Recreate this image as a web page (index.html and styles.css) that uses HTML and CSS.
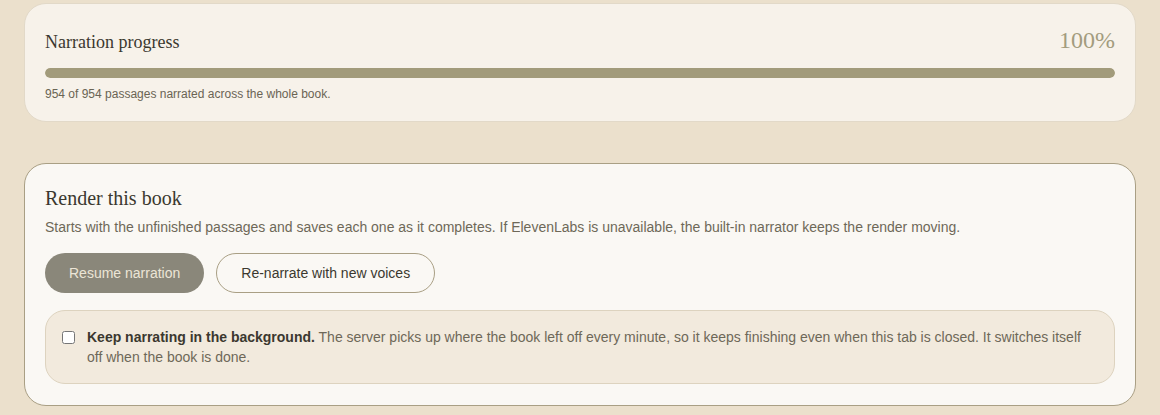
FILE: index.html
```html
<!DOCTYPE html>
<html lang="en">
<head>
<meta charset="utf-8">
<title>Narration</title>
<link rel="stylesheet" href="styles.css">
</head>
<body>
<main class="page">
  <section class="card card-progress">
    <div class="progress-head">
      <h2 class="card-title">Narration progress</h2>
      <span class="percent">100%</span>
    </div>
    <div class="bar"><div class="bar-fill" style="width:100%"></div></div>
    <p class="caption">954 of 954 passages narrated across the whole book.</p>
  </section>

  <section class="card card-render">
    <h2 class="render-title">Render this book</h2>
    <p class="desc">Starts with the unfinished passages and saves each one as it completes. If ElevenLabs is unavailable, the built-in narrator keeps the render moving.</p>
    <div class="actions">
      <button class="btn btn-primary" type="button">Resume narration</button>
      <button class="btn btn-outline" type="button">Re-narrate with new voices</button>
    </div>
    <label class="bg-option">
      <input type="checkbox" class="check">
      <span class="bg-text"><strong>Keep narrating in the background.</strong> The server picks up where the book left off every minute, so it keeps finishing even when this tab is closed. It switches itself off when the book is done.</span>
    </label>
  </section>
</main>
</body>
</html>
```
FILE: styles.css
```css
html, body {
  margin: 0;
  padding: 0;
  background: #ebe0cc;
}

body {
  font-family: "Liberation Sans", Arial, sans-serif;
  color: #3b382f;
}

.page {
  padding: 3px 24px 10px;
  display: flex;
  flex-direction: column;
  gap: 41px;
}

.card {
  border-radius: 22px;
  padding: 22px 20px 21px;
}

.card-progress {
  background: #f7f2ea;
  border: 1px solid #e2d9c8;
  padding-bottom: 19px;
}

.progress-head {
  display: flex;
  justify-content: space-between;
  align-items: baseline;
  line-height: 29px;
}

.card-title {
  margin: 0;
  font-family: "Liberation Serif", "Times New Roman", serif;
  font-weight: normal;
  font-size: 18px;
  color: #3b382f;
}

.percent {
  font-family: "Liberation Serif", "Times New Roman", serif;
  font-size: 24px;
  color: #a39c7e;
}

.bar {
  margin-top: 11px;
  height: 10px;
  border-radius: 5px;
  background: #e6dfd0;
  overflow: hidden;
}

.bar-fill {
  height: 100%;
  background: #a29b7b;
  border-radius: 5px;
}

.caption {
  margin: 9px 0 0;
  font-size: 12px;
  line-height: 15px;
  color: #6a6454;
}

.card-render {
  background: #faf8f4;
  border: 1px solid #a99f84;
}

.render-title {
  margin: 0;
  font-family: "Liberation Serif", "Times New Roman", serif;
  font-weight: normal;
  font-size: 20px;
  line-height: 25px;
  color: #3b382f;
}

.desc {
  margin: 6px 0 0;
  font-size: 14px;
  line-height: 20px;
  color: #6e6858;
}

.actions {
  margin-top: 16px;
  display: flex;
  gap: 12px;
}

.btn {
  font-family: "Liberation Sans", Arial, sans-serif;
  font-size: 14px;
  height: 40px;
  padding: 0 24px;
  border-radius: 20px;
  cursor: pointer;
}

.btn-primary {
  background: #8a877a;
  border: none;
  color: #ece5d6;
}

.btn-outline {
  background: transparent;
  border: 1px solid #a99f84;
  color: #3b382f;
}

.bg-option {
  margin-top: 17px;
  display: flex;
  align-items: flex-start;
  gap: 12px;
  padding: 16px 16px;
  background: #f2eadd;
  border: 1px solid #ddd3bf;
  border-radius: 20px;
  font-size: 14px;
  line-height: 20px;
  color: #6e6858;
}

.check {
  margin: 4px 0 0;
  width: 13px;
  height: 13px;
  flex: none;
}

.bg-text strong {
  color: #3b382f;
}
```
